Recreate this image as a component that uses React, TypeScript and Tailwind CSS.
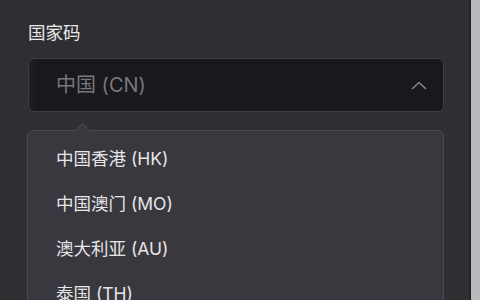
const font = { fontFamily: 'Inter, "Noto Sans CJK SC", sans-serif' };

const options = ["中国香港 (HK)", "中国澳门 (MO)", "澳大利亚 (AU)", "泰国 (TH)"];

export default function App() {
  return (
    <div className="flex h-[300px] w-[480px] overflow-hidden bg-[#2f2e33]" style={font}>
      <div className="flex-1 pl-[28px] pr-[25px] pt-[20px]">
        <p className="text-[17.5px] leading-[26px] text-[#e8e8ea]">国家码</p>
        <div className="mt-[12px] flex h-[54px] items-center rounded-[6px] border border-[#3f3e44] bg-[#19181c] pl-[27px] pr-[16px] shadow-[inset_8px_0_8px_-6px_rgba(255,255,255,0.05)]">
          <span className="flex-1 text-[20px] text-[#78777d]">中国 (CN)</span>
          <svg width="16" height="9" viewBox="0 0 16 9" fill="none">
            <path d="M1.5 7.5L8 1.5L14.5 7.5" stroke="#8d8c92" strokeWidth="1.4" strokeLinecap="round" strokeLinejoin="round" />
          </svg>
        </div>
        <div className="relative mt-[18px] -ml-px h-[200px] rounded-[6px] border border-[#4a4950] bg-[#3a383f] pt-[6px]">
          <div className="absolute -top-[6px] left-[49px] h-[11px] w-[11px] rotate-45 border-l border-t border-[#4a4950] bg-[#3a383f]" />
          {options.map((o) => (
            <div key={o} className="flex h-[45px] items-center pl-[28px] text-[17.5px] text-[#e6e6e8]">
              {o}
            </div>
          ))}
        </div>
      </div>
      <div className="w-[2px] bg-[#222125]" />
      <div className="w-[9px] bg-[#b9babe]" />
    </div>
  );
}
